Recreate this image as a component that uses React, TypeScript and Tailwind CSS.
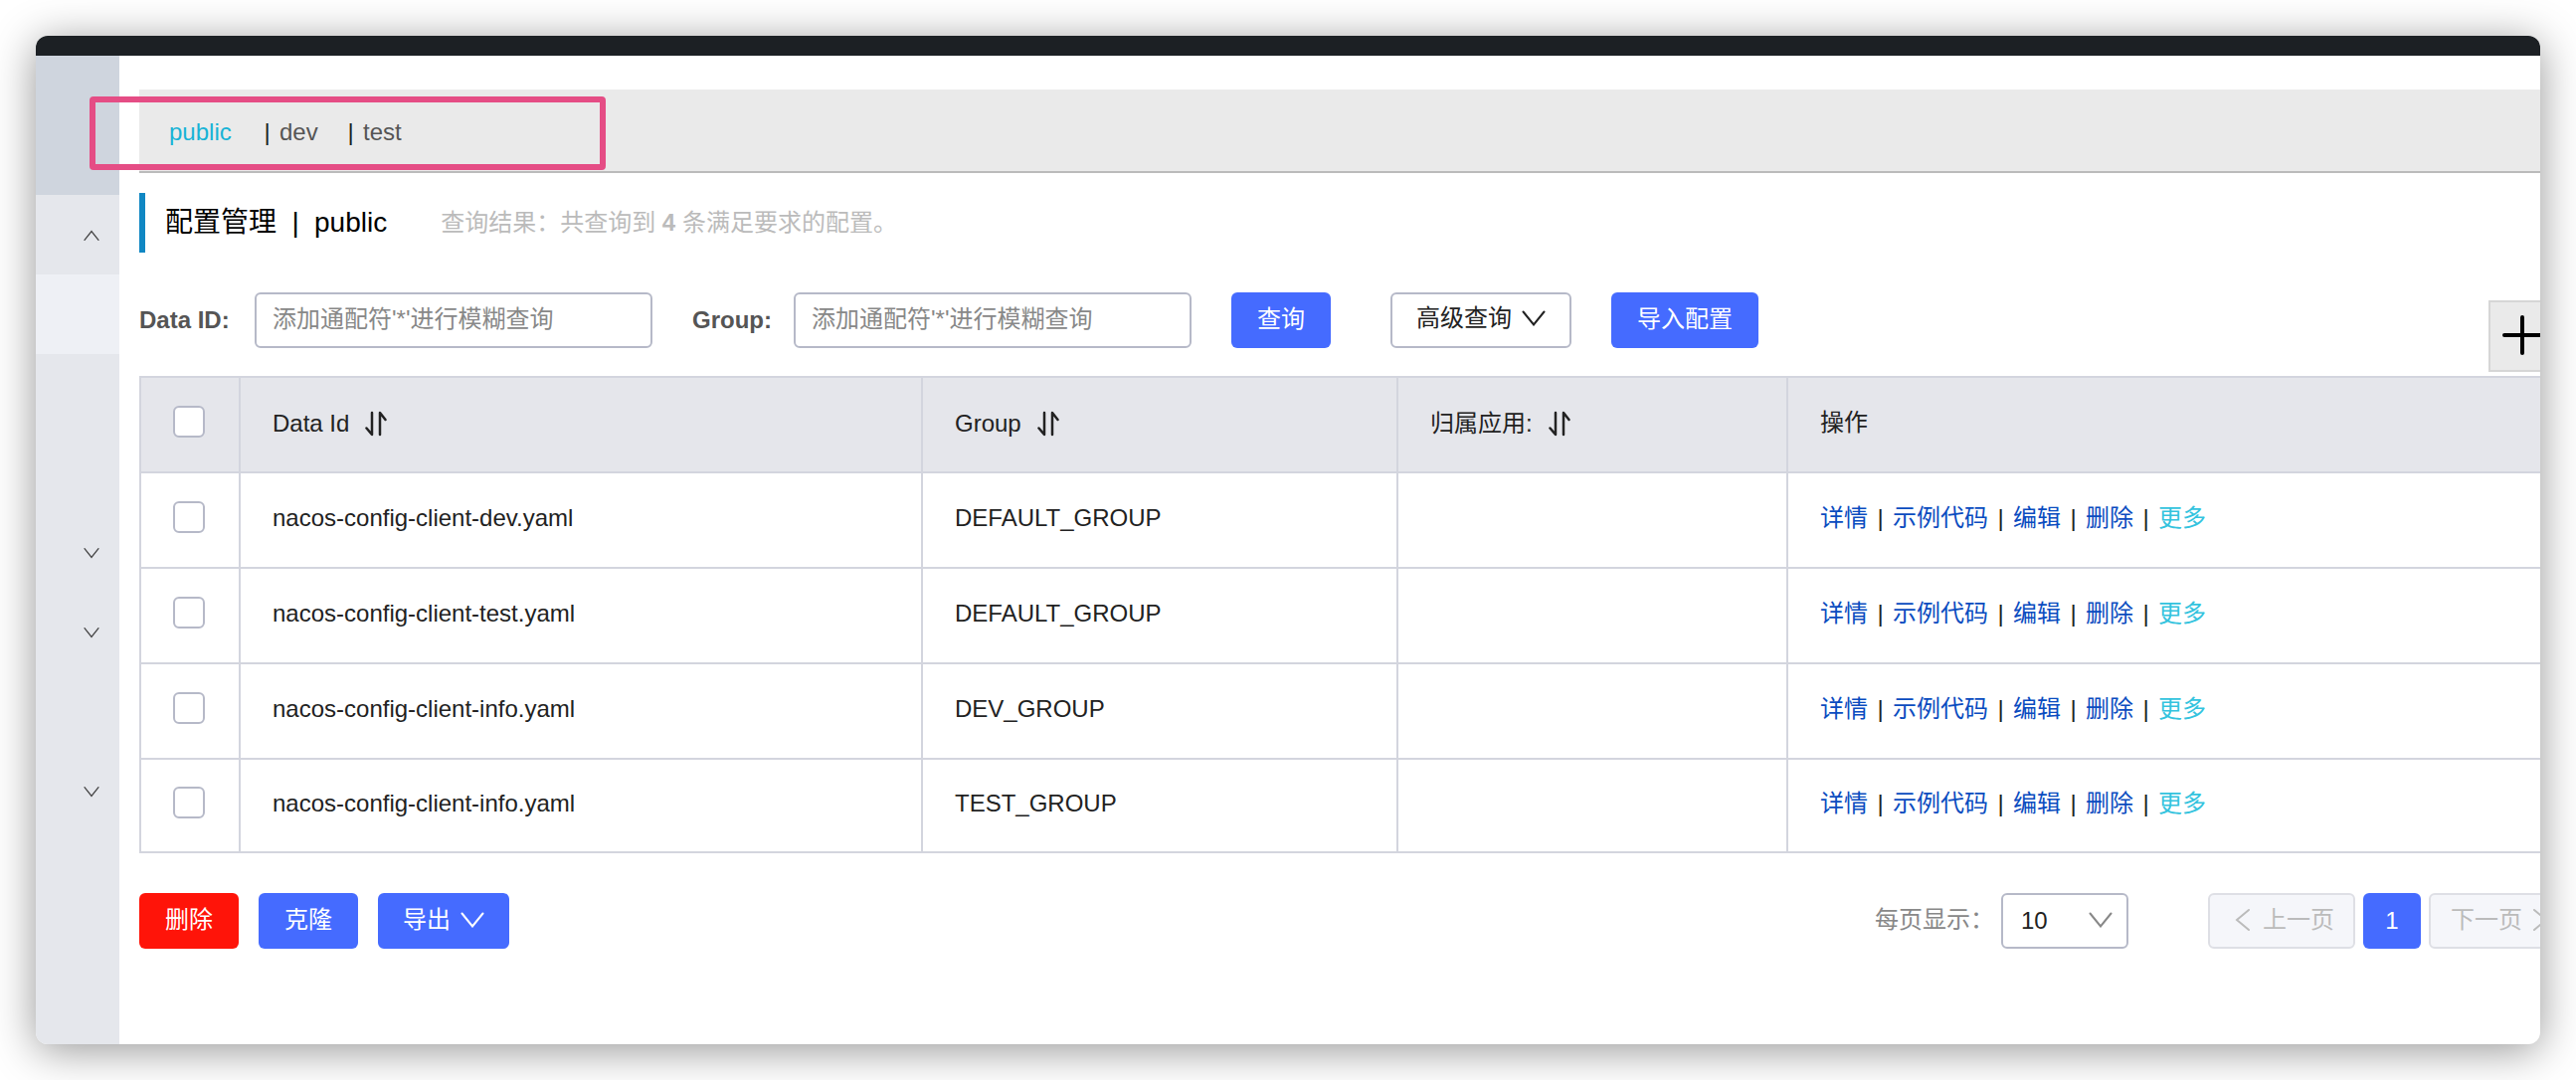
import React from "react";

type ConfigRow = { id: string; dataId: string; group: string; app: string };

const rows: ConfigRow[] = [
  { id: "1", dataId: "nacos-config-client-dev.yaml", group: "DEFAULT_GROUP", app: "" },
  { id: "2", dataId: "nacos-config-client-test.yaml", group: "DEFAULT_GROUP", app: "" },
  { id: "3", dataId: "nacos-config-client-info.yaml", group: "DEV_GROUP", app: "" },
  { id: "4", dataId: "nacos-config-client-info.yaml", group: "TEST_GROUP", app: "" },
];

function Chevron({ className }: { className: string }) {
  return (
    <svg viewBox="0 0 24 16" fill="none" stroke="currentColor" strokeWidth="2" strokeLinecap="round" className={className} aria-hidden="true">
      <path d="M1.500 1.500 12 14.500 22.500 1.500" />
    </svg>
  );
}

function AngleIcon({ className }: { className: string }) {
  return (
    <svg viewBox="0 0 16 24" fill="none" stroke="currentColor" strokeWidth="2" strokeLinecap="round" className={className} aria-hidden="true">
      <path d="M14 2 2 12l12 10" />
    </svg>
  );
}

function SortIcon() {
  return (
    <svg viewBox="0 0 22 26" fill="none" stroke="currentColor" strokeWidth="2.5" strokeLinecap="round" strokeLinejoin="round" className="h-[26px] w-[22px]" aria-hidden="true">
      <path d="M7 2v22L1.500 17.500M15 24V2l5.500 7" />
    </svg>
  );
}

function Checkbox({ label }: { label: string }) {
  return (
    <input
      type="checkbox"
      aria-label={label}
      className="block size-8 appearance-none rounded-md border-2 border-[#b6b9c8] bg-white"
    />
  );
}

function SortHeader({ children }: { children: React.ReactNode }) {
  return (
    <th className="border-l-2 border-[#d3d5de] px-8 pb-0.5 text-left font-normal">
      <button type="button" className="flex items-center gap-4">
        {children}
        <SortIcon />
      </button>
    </th>
  );
}

function Sidebar() {
  const items = [
    { name: "配置管理", icon: "up" },
    { name: "配置列表", icon: "active" },
    { name: "历史版本", icon: "" },
    { name: "监听查询", icon: "" },
    { name: "服务管理", icon: "down" },
    { name: "权限控制", icon: "down" },
    { name: "命名空间", icon: "" },
    { name: "集群管理", icon: "down" },
  ];
  return (
    <nav className="w-[84px] shrink-0 bg-[#e5e7ec] text-[#444]">
      <div className="h-[140px] bg-[#cfd5de]" />
      {items.map((item) => (
        <a
          key={item.name}
          href="#"
          aria-label={item.name}
          className={`flex h-20 items-center justify-end pr-5 ${item.icon === "active" ? "bg-[#eef0f5]" : ""}`}
        >
          {item.icon === "up" && <Chevron className="mt-0.5 h-3 w-4 rotate-180" />}
          {item.icon === "down" && <Chevron className="h-3 w-4" />}
        </a>
      ))}
    </nav>
  );
}

function Actions() {
  const links = ["详情", "示例代码", "编辑", "删除"];
  return (
    <div className="flex items-center whitespace-nowrap text-[#0a4cc0]">
      {links.map((text) => (
        <React.Fragment key={text}>
          <a href="#">{text}</a>
          <span className="w-[25px] text-center text-[#222]">|</span>
        </React.Fragment>
      ))}
      <a href="#" className="text-[#33c3de]">更多</a>
    </div>
  );
}

const primary = "h-14 rounded-md bg-[#456bff] text-white";
const cell = "border-t-2 border-l-2 border-[#d3d5de] px-8 pb-1";

export default function App() {
  return (
    <div className="min-h-screen bg-white p-9 font-['Liberation_Sans','Noto_Sans_CJK_SC',sans-serif] text-2xl text-[#222]">
      <div className="overflow-hidden rounded-xl bg-white shadow-[0_6px_44px_rgba(0,0,0,0.42)]">
        <header className="h-5 bg-[#1c2024]" />
        <div className="flex">
          <Sidebar />
          <main className="-mr-9 ml-5 min-w-0 flex-1 pt-[34px] pb-24">
            <div className="relative flex h-[84px] items-center border-b-2 border-[#bbb] bg-[#eaeaea] pt-1 pl-[30px] text-[#555]">
              <button type="button" className="w-[86px] text-left text-[#17b3d6]">public</button>
              <span className="w-[25px] text-center text-[#222]">|</span>
              <button type="button" className="w-[59px] text-left">dev</button>
              <span className="w-[25px] text-center text-[#222]">|</span>
              <button type="button">test</button>
              <div className="pointer-events-none absolute top-[7px] -left-[50px] h-[74px] w-[519px] rounded border-[6px] border-[#e54d85]" />
            </div>

            <div className="mt-5 flex h-[60px] items-center border-l-[6px] border-[#1087c3] pl-5">
              <h1 className="flex text-[28px] text-black">
                配置管理<span className="w-[38px] text-center">|</span>public
              </h1>
              <p className="ml-[54px] text-[#bbb]">
                查询结果：共查询到 <strong>4</strong> 条满足要求的配置。
              </p>
            </div>

            <form className="mt-10 flex h-[84px] items-start pr-4" onSubmit={(e) => e.preventDefault()}>
              <label htmlFor="data-id" className="w-[116px] leading-[56px] font-bold text-[#555]">Data ID:</label>
              <input id="data-id" placeholder="添加通配符'*'进行模糊查询" className="h-14 w-[400px] rounded-md border-2 border-[#b6b9c8] px-4 pb-0.5 placeholder:text-[#888]" />
              <label htmlFor="group" className="ml-10 w-[102px] leading-[56px] font-bold text-[#555]">Group:</label>
              <input id="group" placeholder="添加通配符'*'进行模糊查询" className="h-14 w-[400px] rounded-md border-2 border-[#b6b9c8] px-4 pb-0.5 placeholder:text-[#888]" />
              <button type="submit" className={`${primary} ml-10 w-[100px] pb-0.5`}>查询</button>
              <button type="button" className="ml-[60px] flex h-14 w-[182px] items-center justify-center gap-2.5 rounded-md border-2 border-[#b6b9c8] bg-white pb-1">
                高级查询
                <Chevron className="h-4 w-6" />
              </button>
              <button type="button" className={`${primary} ml-10 w-[148px] pb-0.5`}>导入配置</button>
              <button type="button" aria-label="新建配置" className="mt-2 ml-auto flex size-[72px] items-center justify-center border-2 border-[#d6d6d6] bg-[#eaeaea] text-black">
                <svg viewBox="0 0 40 40" fill="none" stroke="currentColor" strokeWidth="4" strokeLinecap="round" className="mr-1 mb-0.5 size-10" aria-hidden="true">
                  <path d="M20 2v36M2 20h36" />
                </svg>
              </button>
            </form>

            <table className="w-full table-fixed border-separate border-spacing-0 border-2 border-[#d3d5de]">
              <colgroup>
                <col className="w-[98px]" />
                <col className="w-[686px]" />
                <col className="w-[478px]" />
                <col className="w-[392px]" />
                <col />
              </colgroup>
              <thead className="bg-[#e5e6eb]">
                <tr className="h-[94px]">
                  <th className="pb-1.5 pl-8"><Checkbox label="全选" /></th>
                  <SortHeader>Data Id</SortHeader>
                  <SortHeader>Group</SortHeader>
                  <SortHeader>归属应用:</SortHeader>
                  <th className="border-l-2 border-[#d3d5de] px-8 pb-1 text-left font-normal">操作</th>
                </tr>
              </thead>
              <tbody>
                {rows.map((row) => (
                  <tr key={row.id} className="h-24 last:h-[94px]">
                    <td className="border-t-2 border-[#d3d5de] pb-1.5 pl-8"><Checkbox label={`选择 ${row.dataId} ${row.group}`} /></td>
                    <td className={cell}>{row.dataId}</td>
                    <td className={cell}>{row.group}</td>
                    <td className={cell}>{row.app}</td>
                    <td className={cell}><Actions /></td>
                  </tr>
                ))}
              </tbody>
            </table>

            <div className="mt-10 flex h-14 items-center">
              <button type="button" className="h-14 w-[100px] rounded-md bg-[#ff1409] pb-0.5 text-white">删除</button>
              <button type="button" className={`${primary} ml-5 w-[100px] pb-0.5`}>克隆</button>
              <button type="button" className={`${primary} ml-5 flex w-[132px] items-center justify-center gap-2.5 pb-0.5`}>
                导出
                <Chevron className="h-4 w-6" />
              </button>
              <label htmlFor="page-size" className="ml-auto w-[127px] pb-0.5 whitespace-nowrap text-[#888]">每页显示：</label>
              <div className="relative">
                <select id="page-size" defaultValue="10" className="h-14 w-32 appearance-none rounded-md border-2 border-[#b6b9c8] bg-white pl-[18px]">
                  <option>10</option>
                  <option>20</option>
                  <option>50</option>
                </select>
                <Chevron className="pointer-events-none absolute top-[19px] right-4 h-4 w-6 text-[#888]" />
              </div>
              <nav aria-label="分页" className="ml-20 flex gap-2">
                <button type="button" disabled className="flex h-14 w-[148px] items-center justify-center gap-3 rounded-md border-2 border-[#dedfe5] bg-[#f5f6fa] pb-0.5 pl-1.5 text-[#bbb]">
                  <AngleIcon className="h-6 w-4" />
                  上一页
                </button>
                <button type="button" className={`${primary} w-[58px]`}>1</button>
                <button type="button" disabled className="flex h-14 w-[148px] items-center justify-center gap-2.5 rounded-md border-2 border-[#dedfe5] bg-[#f5f6fa] pr-1.5 pb-0.5 text-[#bbb]">
                  下一页
                  <AngleIcon className="h-6 w-4 rotate-180" />
                </button>
              </nav>
            </div>
          </main>
        </div>
      </div>
    </div>
  );
}
